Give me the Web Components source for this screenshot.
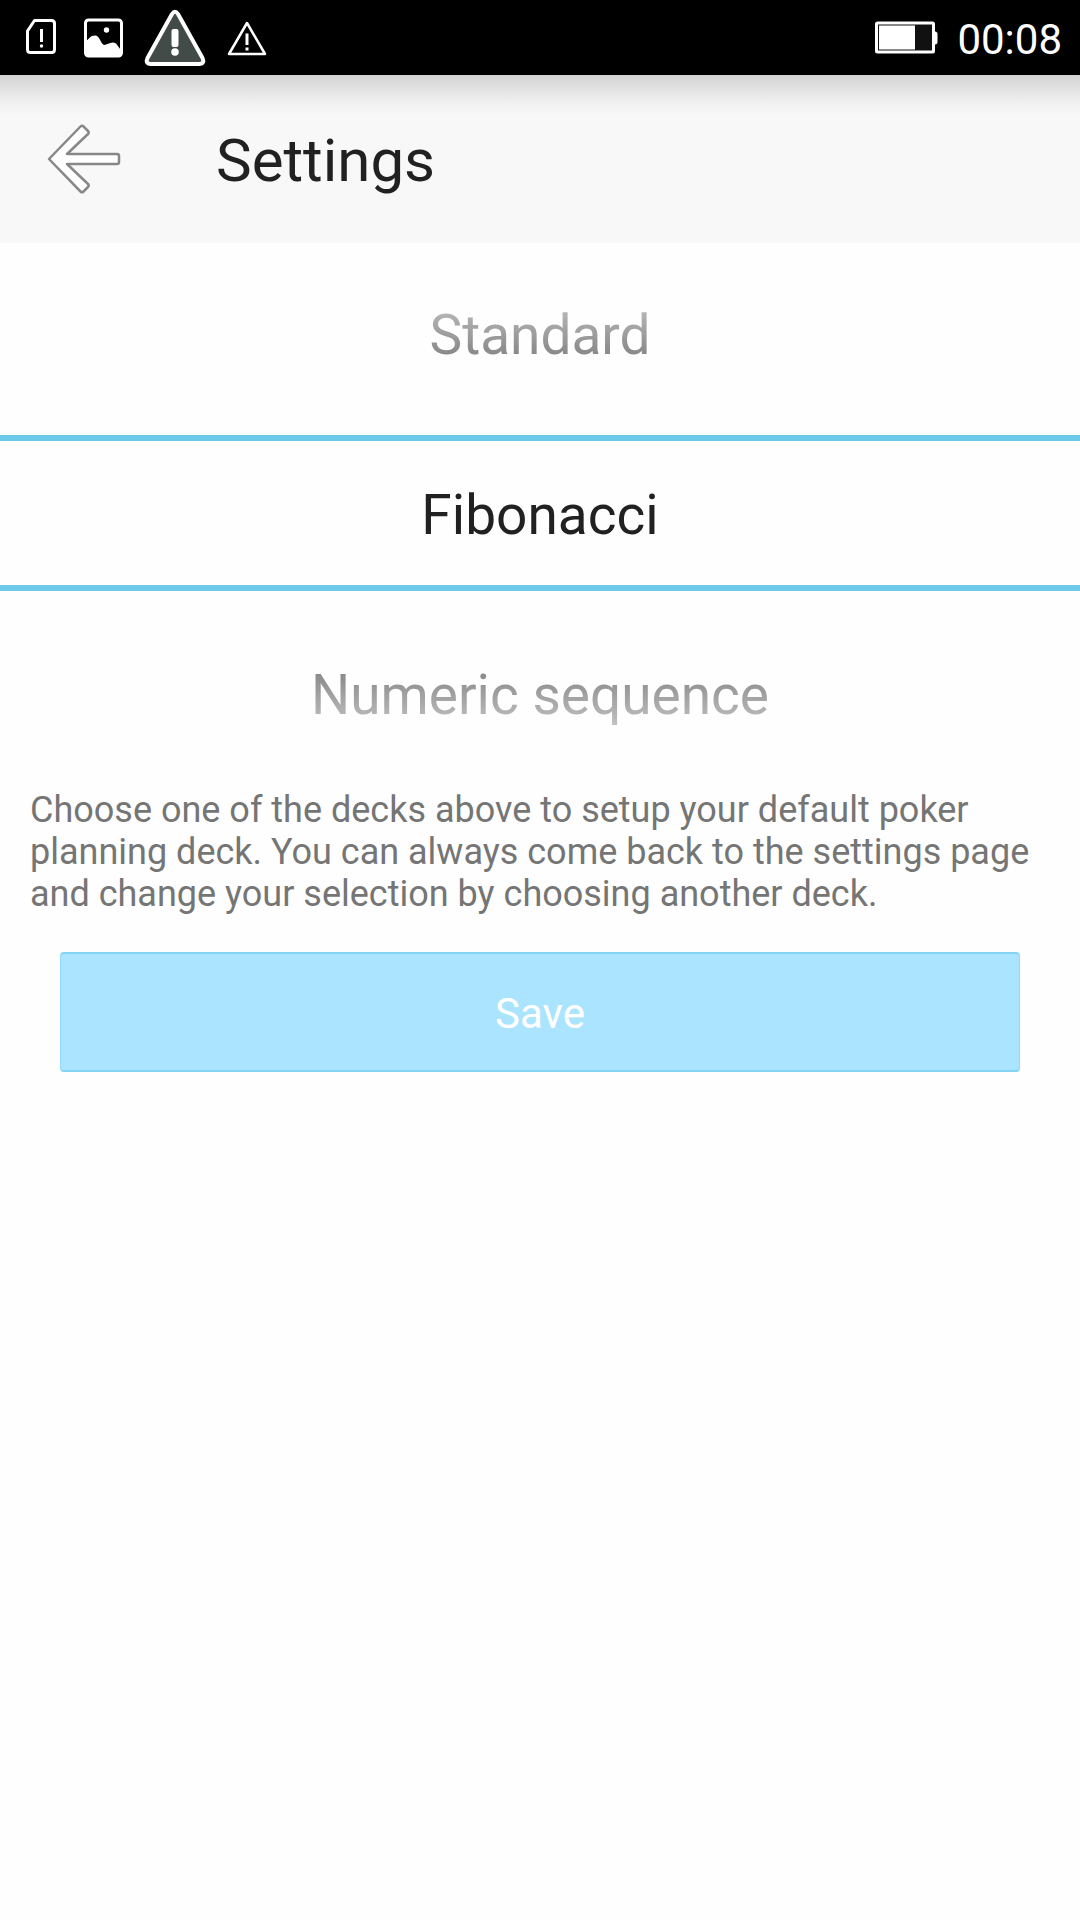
<!DOCTYPE html>
<html lang="en">
<head>
<meta charset="utf-8">
<meta name="viewport" content="width=device-width, initial-scale=1">
<title>Settings</title>
<style>
  html { background: #fefefe; }
  body { margin: 0; font-family: Roboto, "Liberation Sans", sans-serif; color: #212121; }
</style>
</head>
<body>
<settings-page>
  <status-bar slot="status" time="00:08"></status-bar>
  <app-header slot="header">Settings</app-header>
  <deck-picker options="Standard|Fibonacci|Numeric sequence" selected="1"></deck-picker>
  <help-text>Choose one of the decks above to setup your default poker planning deck. You can always come back to the settings page and change your selection by choosing another deck.</help-text>
  <save-button>Save</save-button>
</settings-page>

<script>
class BaseElement extends HTMLElement {
  constructor() {
    super();
    this.attachShadow({ mode: "open" });
  }
  connectedCallback() {
    this.shadowRoot.innerHTML = this.render();
  }
}

customElements.define("settings-page", class extends BaseElement {
  render() {
    return `
      <style>
        :host { display: block; }
        main { display: flex; flex-direction: column; }
      </style>
      <slot name="status"></slot>
      <slot name="header"></slot>
      <main><slot></slot></main>`;
  }
});

customElements.define("status-bar", class extends BaseElement {
  render() {
    return `
      <style>
        :host { display: flex; justify-content: space-between; align-items: center; height: 75px;
                padding: 0 18px 0 24px; background: #000; color: #fff; box-sizing: border-box; }
        .notices, .system { display: flex; align-items: center; }
        .notices { gap: 22px; }
        .system { gap: 18px; }
        svg { display: block; }
        time { padding-top: 4px; font-size: 42px; line-height: 50px; }
      </style>
      <div class="notices">
        <svg width="34" height="40" viewBox="0 0 34 40" fill="none" stroke="#fff" stroke-width="3" stroke-linejoin="round">
          <path d="M10.500 2.500H27.500Q30.500 2.500 30.500 5.500V31.500Q30.500 34.500 27.500 34.500H6.500Q3.500 34.500 3.500 31.500V13Z"/>
          <path d="M17.500 11V24"/>
          <circle cx="17.500" cy="28" r="1.700" fill="#fff" stroke="none"/>
        </svg>
        <svg width="48" height="40" viewBox="0 0 48 40">
          <rect x="5.500" y="2" width="36" height="36" rx="3" fill="none" stroke="#fff" stroke-width="3"/>
          <path d="M5 24C9 21 10 17.500 15 17.500S20 25 24 27C27 27 29 24.500 33 24.500S37 28 42 33V37H5Z" fill="#fff"/>
          <circle cx="26.500" cy="12" r="2.700" fill="#fff"/>
        </svg>
        <svg width="52" height="60" viewBox="5 0 52 60" overflow="visible">
          <path d="M27 6Q30 1.500 33 6L57.500 50Q60 55.500 54.500 56H5.500Q0 55.500 2.500 50Z" fill="#434b49" stroke="#fff" stroke-width="4" stroke-linejoin="round"/>
          <rect x="26.500" y="21" width="7" height="18" rx="2" fill="#fff"/>
          <circle cx="30" cy="44" r="3.800" fill="#fff"/>
        </svg>
        <svg width="48" height="40" viewBox="3 0 48 40" fill="none" stroke="#fff" stroke-width="2.500">
          <path d="M26 5L44 36H8Z" stroke-linejoin="round"/>
          <path d="M26 15.500V27M26 29.500V32.500" stroke-width="3"/>
        </svg>
      </div>
      <div class="system">
        <svg width="64" height="34" viewBox="0 0 64 34">
          <rect x="1.500" y="2" width="57" height="29" rx="1" fill="#111" stroke="#fff" stroke-width="3"/>
          <rect x="4" y="4.500" width="36" height="24" fill="#fff"/>
          <path d="M59 11H60.500Q62 11 62 12.500V21.500Q62 23 60.500 23H59Z" fill="#fff" stroke="#fff"/>
        </svg>
        <time>${this.getAttribute("time")}</time>
      </div>`;
  }
});

customElements.define("app-header", class extends BaseElement {
  render() {
    return `
      <style>
        :host { display: flex; align-items: center; gap: 84px; height: 168px; padding: 0 40px 0 36px; box-sizing: border-box;
                background: linear-gradient(#d2d2d2, #e0e0e0 12px, #efefef 26px, #f8f8f8 40px) #f8f8f8; }
        button { display: block; border: 0; padding: 0; background: none; }
        svg { display: block; }
        h1 { margin: 0; padding-top: 4px; font-size: 60px; font-weight: 400; line-height: 72px; }
      </style>
      <button type="button" aria-label="Back">
        <svg width="96" height="80" viewBox="0 0 96 80">
          <path d="M13 40L44.500 7.500Q46 6 47.500 7.500L52 12Q53.500 13.500 52 15L31 35H81Q83 35 83 37V43Q83 45 81 45H31L52 65Q53.500 66.500 52 68L47.500 72.500Q46 74 44.500 72.500Z" fill="#fff" stroke="#888" stroke-width="2.500" stroke-linejoin="round"/>
        </svg>
      </button>
      <h1><slot></slot></h1>`;
  }
});

customElements.define("deck-picker", class extends BaseElement {
  render() {
    const selected = Number(this.getAttribute("selected"));
    const options = this.getAttribute("options").split("|").map((name, i) => `
      <label class="${i < selected ? "before" : i > selected ? "after" : "current"}">
        <input type="radio" name="deck" ${i === selected ? "checked" : ""}><span>${name}</span>
      </label>`).join("");
    return `
      <style>
        :host { display: block; }
        fieldset { display: flex; flex-direction: column; margin: 0; padding: 0; border: 0; min-width: 0; }
        label { display: flex; justify-content: center; align-items: center; box-sizing: border-box; height: 180px;
                padding-top: 4px; font-size: 55px; line-height: 64px; }
        input { appearance: none; width: 0; height: 0; margin: 0; }
        .before { -webkit-mask-image: linear-gradient(transparent, rgba(0,0,0,.86)); mask-image: linear-gradient(transparent, rgba(0,0,0,.86)); }
        .after { -webkit-mask-image: linear-gradient(rgba(0,0,0,.86), transparent); mask-image: linear-gradient(rgba(0,0,0,.86), transparent); }
        .current { height: 156px; margin: 12px 0; border: solid #6cc9e8; border-width: 6px 0; }
      </style>
      <fieldset aria-label="Default deck">${options}</fieldset>`;
  }
  connectedCallback() {
    super.connectedCallback();
    this.shadowRoot.querySelector("fieldset").addEventListener("change", e => {
      const inputs = [...this.shadowRoot.querySelectorAll("input")];
      this.setAttribute("selected", inputs.indexOf(e.target));
    });
  }
});

customElements.define("help-text", class extends BaseElement {
  render() {
    return `
      <style>
        :host { display: block; padding: 6px 30px 0; color: #757575; }
        p { margin: 0; font-size: 36px; line-height: 42px; }
      </style>
      <p><slot></slot></p>`;
  }
});

customElements.define("save-button", class extends BaseElement {
  render() {
    return `
      <style>
        :host { display: block; padding: 37px 60px; }
        button { display: block; width: 100%; height: 120px; border: solid; border-width: 2px 1px; border-color: #85d3f3 #95dbf9;
                 border-radius: 4px; padding: 4px 0 0; background: #abe4ff; color: #fff; font: 42px/50px Roboto, sans-serif; }
      </style>
      <button type="button"><slot></slot></button>`;
  }
});
</script>
</body>
</html>
